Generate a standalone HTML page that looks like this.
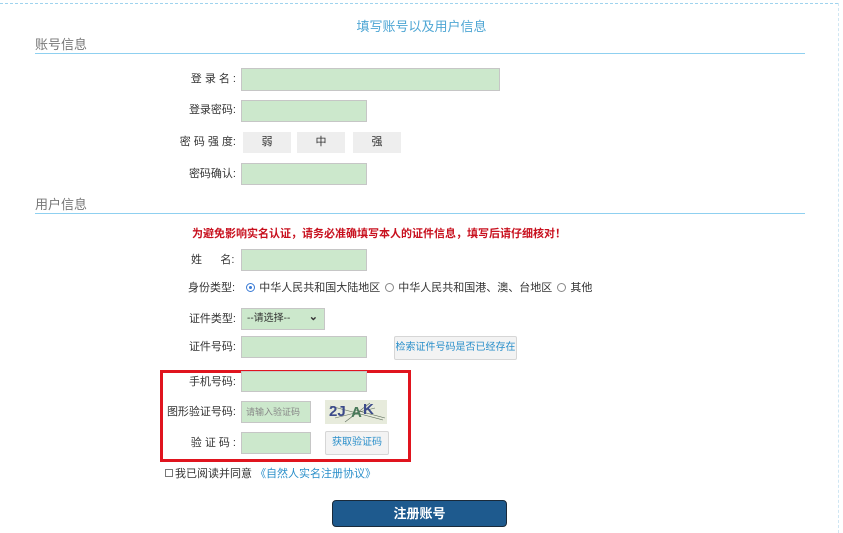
<!DOCTYPE html>
<html><head><meta charset="utf-8"><style>
*{margin:0;padding:0;box-sizing:border-box}
body{width:843px;height:532px;background:#fff;position:relative;overflow:hidden;font-family:"Liberation Sans","Noto Sans CJK SC",sans-serif;font-size:11px;color:#333}
.a{position:absolute;white-space:nowrap}
.in{position:absolute;background:#cce8cc;border:1px solid #c6c6c6}
.lb{position:absolute;text-align:right;width:100px;line-height:22px}
.sb{position:absolute;background:#eee;top:132px;width:48px;height:21px;line-height:21px;text-align:center}
.btn{position:absolute;background:#f3f3f3;border:1px solid #d6d6d6;border-radius:2px;color:#2a8fca;font-size:10px;text-align:center;white-space:nowrap}
.rd{display:inline-block;width:9px;height:9px;border:1px solid #888;border-radius:50%;vertical-align:-1px;margin:0 4px 0 2px;position:relative}
.ln{position:absolute;left:35px;width:770px;height:1px;background:#8fd0f0}
</style></head><body>
<div class="a" style="left:0;top:3px;width:838px;border-top:1px dashed #9fd3ee"></div>
<div class="a" style="left:838px;top:3px;height:530px;border-left:1px dashed #cfe6f3"></div>
<div class="a" style="left:0;width:843px;top:19px;text-align:center;font-size:13px;line-height:16px;color:#4ea6d4">填写账号以及用户信息</div>
<div class="a" style="left:35px;top:37px;font-size:13px;line-height:16px;color:#777">账号信息</div>
<div class="ln" style="top:53px"></div>
<div class="lb" style="left:136px;top:68px">登 录 名 :</div>
<div class="in" style="left:241px;top:68px;width:259px;height:23px"></div>
<div class="lb" style="left:136px;top:99px">登录密码:</div>
<div class="in" style="left:241px;top:100px;width:126px;height:22px"></div>
<div class="lb" style="left:136px;top:131px">密 码 强 度:</div>
<div class="sb" style="left:243px">弱</div><div class="sb" style="left:297px">中</div><div class="sb" style="left:353px">强</div>
<div class="lb" style="left:136px;top:163px">密码确认:</div>
<div class="in" style="left:241px;top:163px;width:126px;height:22px"></div>
<div class="a" style="left:35px;top:197px;font-size:13px;line-height:16px;color:#777">用户信息</div>
<div class="ln" style="top:213px"></div>
<div class="a" style="left:192px;top:227px;font-size:11px;line-height:14px;font-weight:bold;color:#c8101e">为避免影响实名认证，请务必准确填写本人的证件信息，填写后请仔细核对！</div>
<div class="a" style="left:191px;top:249px;line-height:22px">姓&nbsp;&nbsp;&nbsp;&nbsp;&nbsp;&nbsp;名:</div>
<div class="in" style="left:241px;top:249px;width:126px;height:22px"></div>
<div class="a" style="left:188px;top:280px;line-height:16px">身份类型: &nbsp;&nbsp;<span class="rd" style="border-color:#3a7bd5"><span style="position:absolute;left:2px;top:2px;width:3px;height:3px;background:#3a7bd5;border-radius:50%"></span></span>中华人民共和国大陆地区 <span class="rd"></span>中华人民共和国港、澳、台地区 <span class="rd"></span>其他</div>
<div class="lb" style="left:136px;top:308px;width:100px">证件类型:</div>
<div class="in" style="left:241px;top:308px;width:84px;height:22px;font-size:10px;line-height:20px;padding-left:5px">--请选择--<span style="position:absolute;right:6px;top:-2px;font-size:11px;font-weight:bold">&#8964;</span></div>
<div class="lb" style="left:136px;top:336px">证件号码:</div>
<div class="in" style="left:241px;top:336px;width:126px;height:22px"></div>
<div class="btn" style="left:394px;top:336px;width:123px;height:24px;line-height:22px">检索证件号码是否已经存在</div>
<div class="a" style="left:160px;top:370px;width:251px;height:92px;border:3px solid #e0141e"></div>
<div class="lb" style="left:136px;top:371px">手机号码:</div>
<div class="in" style="left:241px;top:371px;width:126px;height:21px"></div>
<div class="lb" style="left:136px;top:401px">图形验证号码:</div>
<div class="in" style="left:241px;top:401px;width:70px;height:22px;font-size:9px;color:#888;line-height:20px;padding-left:4px">请输入验证码</div>
<div class="a" style="left:325px;top:400px;width:62px;height:24px;background:#e7ebdc;overflow:hidden">
<svg width="62" height="24"><g stroke="#5a6a5a" stroke-width=".6"><line x1="5" y1="6" x2="58" y2="20"/><line x1="20" y1="22" x2="45" y2="3"/><line x1="30" y1="10" x2="60" y2="18"/><line x1="10" y1="18" x2="50" y2="8"/></g><text x="4" y="16" font-family="Liberation Sans" font-weight="bold" font-size="15" fill="#3c4a8a">2J</text><text x="26" y="17" font-family="Liberation Sans" font-weight="bold" font-size="15" fill="#4a7a5a">A</text><text x="38" y="14" font-family="Liberation Sans" font-weight="bold" font-size="15" fill="#3c4a8a">K</text></svg></div>
<div class="lb" style="left:136px;top:432px">验 证 码 :</div>
<div class="in" style="left:241px;top:432px;width:70px;height:22px"></div>
<div class="btn" style="left:325px;top:431px;width:64px;height:24px;line-height:22px">获取验证码</div>
<div class="a" style="left:165px;top:467px;line-height:14px"><span style="display:inline-block;width:8px;height:8px;border:1px solid #777;margin-right:2px"></span>我已阅读并同意 <span style="color:#2a8fca">《自然人实名注册协议》</span></div>
<div class="a" style="left:332px;top:500px;width:175px;height:27px;background:#1e5a8e;border:1px solid #1a2a3a;border-radius:4px;color:#fff;font-weight:bold;font-size:13px;text-align:center;line-height:25px">注册账号</div>
</body></html>
